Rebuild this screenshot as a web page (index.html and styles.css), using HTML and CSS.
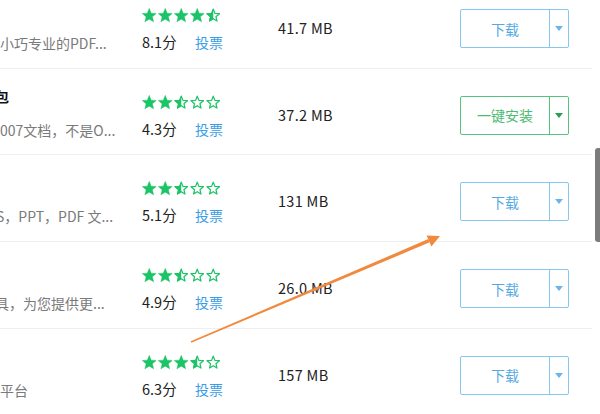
FILE: index.html
```html
<!DOCTYPE html>
<html lang="zh-CN">
<head>
<meta charset="utf-8">
<link rel="stylesheet" href="styles.css">
</head>
<body>
<svg class="defs" width="0" height="0" aria-hidden="true">
  <defs>
    <symbol id="s-full" viewBox="0 0 14 14"><polygon points="7,0.1 8.88,4.71 13.85,5.08 10.04,8.29 11.23,13.12 7,10.5 2.77,13.12 3.96,8.29 0.15,5.08 5.12,4.71" fill="#1bc466" stroke="#1bc466" stroke-width="0.4" stroke-linejoin="round"/></symbol>
    <symbol id="s-half" viewBox="0 0 14 14"><polygon points="7,0.1 7,10.5 2.77,13.12 3.96,8.29 0.15,5.08 5.12,4.71" fill="#1bc466"/><polygon points="7,0.9 8.6,4.95 13,5.3 9.6,8.15 10.6,12.35 7,10.1 3.4,12.35 4.4,8.15 1,5.3 5.4,4.95" fill="none" stroke="#1bc466" stroke-width="1.2" stroke-linejoin="round"/></symbol>
    <symbol id="s-empty" viewBox="0 0 14 14"><polygon points="7,0.9 8.6,4.95 13,5.3 9.6,8.15 10.6,12.35 7,10.1 3.4,12.35 4.4,8.15 1,5.3 5.4,4.95" fill="none" stroke="#1bc466" stroke-width="1.2" stroke-linejoin="round"/></symbol>
  </defs>
</svg>
<div class="page">
  <ul class="list">
    <li class="row">
      <div class="info"><div class="title"></div><div class="desc">小巧专业的PDF...</div></div>
      <div class="rating">
        <div class="stars"><svg><use href="#s-full"/></svg><svg><use href="#s-full"/></svg><svg><use href="#s-full"/></svg><svg><use href="#s-full"/></svg><svg><use href="#s-half"/></svg></div>
        <div class="score"><span class="num">8.1分</span><a class="vote">投票</a></div>
      </div>
      <div class="size">41.7 MB</div>
      <div class="btn blue"><span class="main">下载</span><span class="drop"><i class="tri"></i></span></div>
    </li>
    <li class="row">
      <div class="info"><div class="title"><span class="cut">包</span></div><div class="desc">007文档，不是O...</div></div>
      <div class="rating">
        <div class="stars"><svg><use href="#s-full"/></svg><svg><use href="#s-full"/></svg><svg><use href="#s-half"/></svg><svg><use href="#s-empty"/></svg><svg><use href="#s-empty"/></svg></div>
        <div class="score"><span class="num">4.3分</span><a class="vote">投票</a></div>
      </div>
      <div class="size">37.2 MB</div>
      <div class="btn green"><span class="main">一键安装</span><span class="drop"><i class="tri"></i></span></div>
    </li>
    <li class="row">
      <div class="info"><div class="title"></div><div class="desc"><span class="cut-s">S，PPT，PDF 文...</span></div></div>
      <div class="rating">
        <div class="stars"><svg><use href="#s-full"/></svg><svg><use href="#s-full"/></svg><svg><use href="#s-half"/></svg><svg><use href="#s-empty"/></svg><svg><use href="#s-empty"/></svg></div>
        <div class="score"><span class="num">5.1分</span><a class="vote">投票</a></div>
      </div>
      <div class="size">131 MB</div>
      <div class="btn blue"><span class="main">下载</span><span class="drop"><i class="tri"></i></span></div>
    </li>
    <li class="row">
      <div class="info"><div class="title"></div><div class="desc"><span class="cut">具，为您提供更...</span></div></div>
      <div class="rating">
        <div class="stars"><svg><use href="#s-full"/></svg><svg><use href="#s-full"/></svg><svg><use href="#s-half"/></svg><svg><use href="#s-empty"/></svg><svg><use href="#s-empty"/></svg></div>
        <div class="score"><span class="num">4.9分</span><a class="vote">投票</a></div>
      </div>
      <div class="size">26.0 MB</div>
      <div class="btn blue"><span class="main">下载</span><span class="drop"><i class="tri"></i></span></div>
    </li>
    <li class="row">
      <div class="info"><div class="title"></div><div class="desc">平台</div></div>
      <div class="rating">
        <div class="stars"><svg><use href="#s-full"/></svg><svg><use href="#s-full"/></svg><svg><use href="#s-full"/></svg><svg><use href="#s-half"/></svg><svg><use href="#s-empty"/></svg></div>
        <div class="score"><span class="num">6.3分</span><a class="vote">投票</a></div>
      </div>
      <div class="size">157 MB</div>
      <div class="btn blue"><span class="main">下载</span><span class="drop"><i class="tri"></i></span></div>
    </li>
  </ul>
  <svg class="arrow" width="600" height="414" viewBox="0 0 600 414" aria-hidden="true">
    <polygon points="191.3,342.7 190.7,341.3 428.3,239.1 429.7,242.3" fill="#f08a3e"/>
    <polygon points="440,236 426.6,235.6 431.4,246.4" fill="#f08a3e"/>
  </svg>
  <div class="scrollbar"></div>
</div>
</body>
</html>
```
FILE: styles.css
```css
html, body {
  margin: 0;
  padding: 0;
  background: #fff;
}
body {
  width: 600px;
  height: 414px;
  overflow: hidden;
  font-family: "Noto Sans CJK SC", "Noto Sans", sans-serif;
  font-size: 14px;
  color: #333;
}
.defs {
  position: absolute;
  width: 0;
  height: 0;
}
.page {
  position: relative;
  width: 600px;
  height: 414px;
  overflow: hidden;
}
.list {
  list-style: none;
  margin: -18px 0 0 0;
  padding: 0;
  width: 592px;
}
.row {
  box-sizing: border-box;
  height: 86.7px;
  border-bottom: 1px solid #efefef;
  display: flex;
  align-items: flex-start;
}
.info {
  width: 142px;
  padding-top: 17px;
  overflow: hidden;
  white-space: nowrap;
}
.title {
  height: 20px;
  line-height: 20px;
  font-weight: bold;
  color: #111;
}
.desc {
  margin-top: 14px;
  height: 20px;
  line-height: 20px;
  color: #7a7a7a;
}
.cut { display: inline-block; margin-left: -5px; }
.cut-s { display: inline-block; margin-left: -4px; }
.rating {
  width: 136px;
  padding-top: 26px;
}
.stars {
  display: flex;
  gap: 1.6px;
  height: 15px;
}
.stars svg {
  width: 14.5px;
  height: 15px;
}
.score {
  margin-top: 9px;
  height: 20px;
  line-height: 20px;
  white-space: nowrap;
  font-size: 14.5px;
}
.num {
  display: inline-block;
  width: 53px;
  color: #222;
}
.vote {
  color: #3a9de6;
  font-size: 14px;
}
.size {
  width: 182px;
  padding-top: 36px;
  line-height: 20px;
  font-size: 14.5px;
  letter-spacing: 0.3px;
  color: #222;
}
.btn {
  margin-top: 27px;
  box-sizing: border-box;
  width: 109px;
  height: 39px;
  border: 1px solid #86c6ef;
  border-radius: 2px;
  display: flex;
}
.btn .main {
  width: 88px;
  display: flex;
  align-items: center;
  justify-content: center;
  color: #55a9e2;
  border-right: 1px solid #86c6ef;
}
.btn .drop {
  flex: 1;
  display: flex;
  align-items: center;
  justify-content: center;
}
.tri {
  width: 0;
  height: 0;
  border-left: 4.5px solid transparent;
  border-right: 4.5px solid transparent;
  border-top: 5px solid #6ab6ea;
}
.btn.green {
  border-color: #58c27f;
}
.btn.green .main {
  color: #4dbb72;
  border-right-color: #58c27f;
}
.btn.green .tri {
  border-top-color: #2e9c56;
}
.arrow {
  position: absolute;
  left: 0;
  top: 0;
  pointer-events: none;
}
.scrollbar {
  position: absolute;
  left: 595px;
  top: 148px;
  width: 6px;
  height: 94px;
  background: #7c7c7c;
  border-radius: 3px 0 0 3px;
}
```
